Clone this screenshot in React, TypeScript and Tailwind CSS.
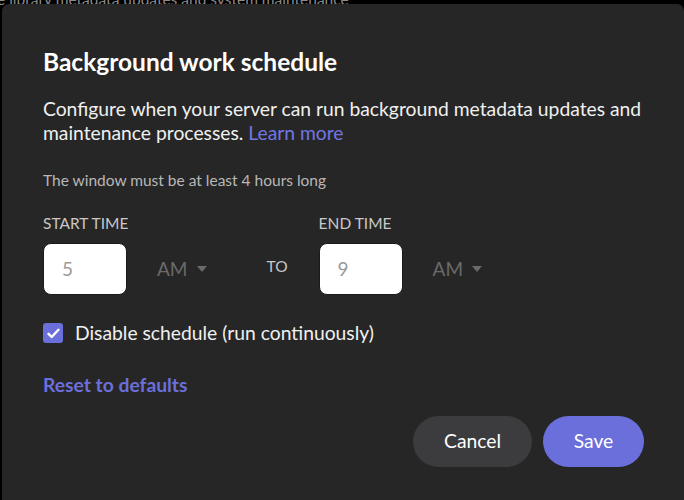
import React from 'react';

const TimeField: React.FC<{ label: string; value: string }> = ({ label, value }) => (
  <div className="flex flex-col">
    <span className="text-[15.5px] leading-[20px] text-[#c8c8c8] uppercase">{label}</span>
    <div className="mt-[10px] flex items-center">
      <div className="flex h-[52px] w-[84px] items-center rounded-[8px] border border-[#1a1a1a] bg-white pl-[18px] text-[19px] text-[#9a9a9a]">
        {value}
      </div>
      <div className="ml-[30px] flex items-center text-[19px] text-[#6a6a6a]">
        AM
        <svg className="ml-[9px]" width="10" height="6" viewBox="0 0 10 6">
          <path d="M0 0h10L5 6z" fill="#6a6a6a" />
        </svg>
      </div>
    </div>
  </div>
);

const App: React.FC = () => {
  return (
    <div className="relative h-[500px] w-[684px] overflow-hidden bg-black font-['Lato',sans-serif]">
      <div className="absolute left-[-3px] top-[-12px] text-[15.5px] text-[#8a8a8a]">
        e library metadata updates and system maintenance
      </div>
      <div className="relative ml-[2px] mt-[4px] h-[520px] rounded-[7px] bg-[#262626] pl-[41px] pr-[40px] pt-[43px]">
        <h2 className="text-[24.5px] font-bold leading-[30px] text-white">Background work schedule</h2>
        <div className="mt-[20px] text-[19.3px] leading-[24px] text-[#f0f0f0]">
          <div>Configure when your server can run background metadata updates and</div>
          <div>
            maintenance processes. <span className="text-[#7276e3]">Learn more</span>
          </div>
        </div>
        <p className="mt-[25px] text-[15.5px] leading-[20px] text-[#b8b8b8]">The window must be at least 4 hours long</p>
        <div className="mt-[23px] flex items-end">
          <TimeField label="Start time" value="5" />
          <span className="mb-[17px] ml-[60px] mr-[31px] text-[15.5px] text-[#c8c8c8]">TO</span>
          <TimeField label="End time" value="9" />
        </div>
        <label className="mt-[24px] flex items-center">
          <span className="flex h-[20px] w-[20px] items-center justify-center rounded-[3px] bg-[#6b6fdb]">
            <svg width="13" height="11" viewBox="0 0 13 11">
              <path d="M1.5 5.8l3.2 3.2L11.5 1.8" stroke="white" strokeWidth="2.4" fill="none" strokeLinecap="round" strokeLinejoin="round" />
            </svg>
          </span>
          <span className="ml-[12px] text-[19.3px] text-[#f0f0f0]">Disable schedule (run continuously)</span>
        </label>
        <div className="mt-[23px] text-[19.3px] font-bold text-[#6b6fdb]">Reset to defaults</div>
        <div className="mt-[16px] flex justify-end gap-[11px]">
          <button className="h-[51px] w-[119px] rounded-full bg-[#3c3c3e] text-[19.3px] text-white">Cancel</button>
          <button className="h-[51px] w-[101px] rounded-full bg-[#6b6fdb] text-[19.3px] text-white">Save</button>
        </div>
      </div>
    </div>
  );
};

export default App;
